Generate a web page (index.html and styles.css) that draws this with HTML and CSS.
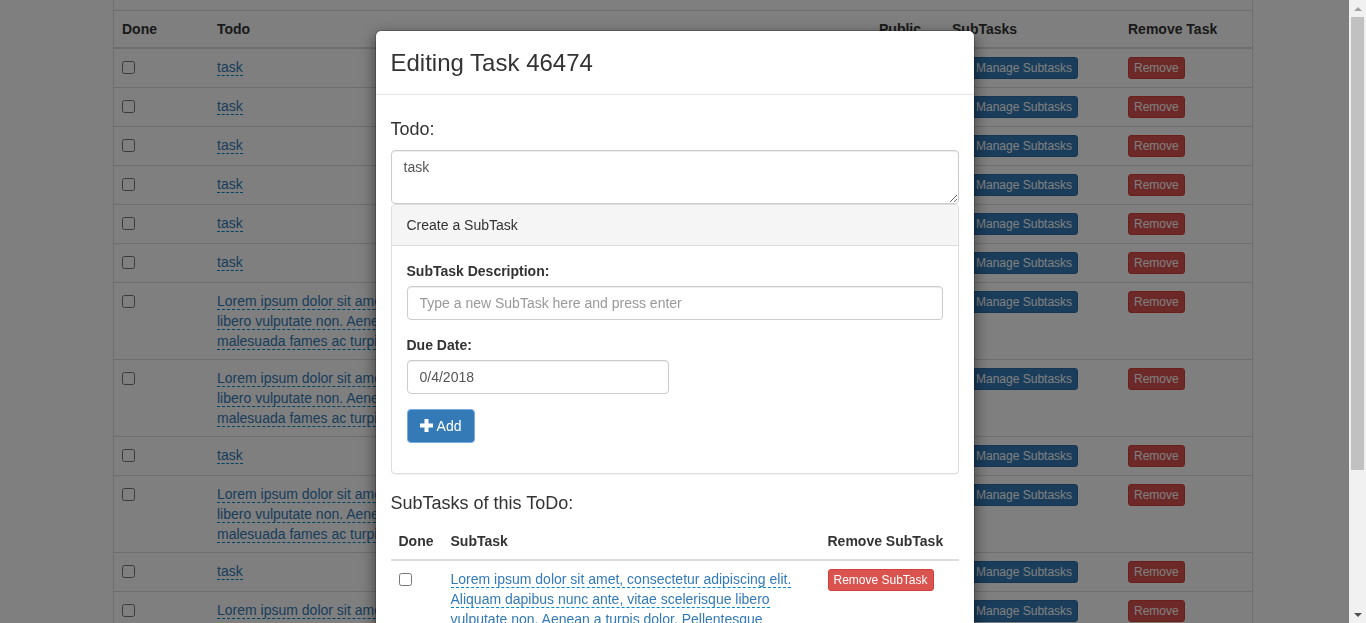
FILE: index.html
```html
<!DOCTYPE html>
<html lang="en">
<head>
<meta charset="utf-8">
<title>Editing Task 46474</title>
<link rel="stylesheet" href="styles.css">
</head>
<body class="modal-open">
  <div class="container">
    <div class="board">
      <div class="board-top"></div>
      <table class="table tasks">
        <colgroup>
          <col class="c-done"><col class="c-todo"><col class="c-public"><col class="c-sub"><col class="c-remove">
        </colgroup>
        <thead>
          <tr><th>Done</th><th>Todo</th><th>Public</th><th>SubTasks</th><th>Remove Task</th></tr>
        </thead>
        <tbody>
          <tr><td><input type="checkbox"></td><td><a class="editable">task</a></td><td></td><td><button class="btn btn-primary btn-xs manage">Manage Subtasks</button></td><td><button class="btn btn-danger btn-xs">Remove</button></td></tr>
          <tr><td><input type="checkbox"></td><td><a class="editable">task</a></td><td></td><td><button class="btn btn-primary btn-xs manage">Manage Subtasks</button></td><td><button class="btn btn-danger btn-xs">Remove</button></td></tr>
          <tr><td><input type="checkbox"></td><td><a class="editable">task</a></td><td></td><td><button class="btn btn-primary btn-xs manage">Manage Subtasks</button></td><td><button class="btn btn-danger btn-xs">Remove</button></td></tr>
          <tr><td><input type="checkbox"></td><td><a class="editable">task</a></td><td></td><td><button class="btn btn-primary btn-xs manage">Manage Subtasks</button></td><td><button class="btn btn-danger btn-xs">Remove</button></td></tr>
          <tr><td><input type="checkbox"></td><td><a class="editable">task</a></td><td></td><td><button class="btn btn-primary btn-xs manage">Manage Subtasks</button></td><td><button class="btn btn-danger btn-xs">Remove</button></td></tr>
          <tr><td><input type="checkbox"></td><td><a class="editable">task</a></td><td></td><td><button class="btn btn-primary btn-xs manage">Manage Subtasks</button></td><td><button class="btn btn-danger btn-xs">Remove</button></td></tr>
          <tr><td><input type="checkbox"></td><td><a class="editable">Lorem ipsum dolor sit amet, consectetur adipiscing elit. Aliquam dapibus nunc ante, vitae scelerisque libero vulputate non. Aenean a turpis dolor. Pellentesque habitant morbi tristique senectus et netus et malesuada fames ac turpis egestas.</a></td><td></td><td><button class="btn btn-primary btn-xs manage">Manage Subtasks</button></td><td><button class="btn btn-danger btn-xs">Remove</button></td></tr>
          <tr><td><input type="checkbox"></td><td><a class="editable">Lorem ipsum dolor sit amet, consectetur adipiscing elit. Aliquam dapibus nunc ante, vitae scelerisque libero vulputate non. Aenean a turpis dolor. Pellentesque habitant morbi tristique senectus et netus et malesuada fames ac turpis egestas.</a></td><td></td><td><button class="btn btn-primary btn-xs manage">Manage Subtasks</button></td><td><button class="btn btn-danger btn-xs">Remove</button></td></tr>
          <tr><td><input type="checkbox"></td><td><a class="editable">task</a></td><td></td><td><button class="btn btn-primary btn-xs manage">Manage Subtasks</button></td><td><button class="btn btn-danger btn-xs">Remove</button></td></tr>
          <tr><td><input type="checkbox"></td><td><a class="editable">Lorem ipsum dolor sit amet, consectetur adipiscing elit. Aliquam dapibus nunc ante, vitae scelerisque libero vulputate non. Aenean a turpis dolor. Pellentesque habitant morbi tristique senectus et netus et malesuada fames ac turpis egestas.</a></td><td></td><td><button class="btn btn-primary btn-xs manage">Manage Subtasks</button></td><td><button class="btn btn-danger btn-xs">Remove</button></td></tr>
          <tr><td><input type="checkbox"></td><td><a class="editable">task</a></td><td></td><td><button class="btn btn-primary btn-xs manage">Manage Subtasks</button></td><td><button class="btn btn-danger btn-xs">Remove</button></td></tr>
          <tr><td><input type="checkbox"></td><td><a class="editable">Lorem ipsum dolor sit amet, consectetur adipiscing elit. Aliquam dapibus nunc ante, vitae scelerisque libero vulputate non. Aenean a turpis dolor. Pellentesque habitant morbi tristique senectus et netus et malesuada fames ac turpis egestas.</a></td><td></td><td><button class="btn btn-primary btn-xs manage">Manage Subtasks</button></td><td><button class="btn btn-danger btn-xs">Remove</button></td></tr>
          <tr><td><input type="checkbox"></td><td><a class="editable">task</a></td><td></td><td><button class="btn btn-primary btn-xs manage">Manage Subtasks</button></td><td><button class="btn btn-danger btn-xs">Remove</button></td></tr>
        </tbody>
      </table>
    </div>
  </div>

  <div class="modal-backdrop"></div>

  <div class="modal">
    <div class="modal-dialog">
      <div class="modal-content">
        <div class="modal-header">
          <h4 class="modal-title">Editing Task 46474</h4>
        </div>
        <div class="modal-body">
          <h4 class="section-title">Todo:</h4>
          <textarea class="form-control todo-text" rows="2">task</textarea>
          <div class="panel">
            <div class="panel-heading">Create a SubTask</div>
            <div class="panel-body">
              <div class="form-group">
                <label class="control-label">SubTask Description:</label>
                <input class="form-control" type="text" placeholder="Type a new SubTask here and press enter">
              </div>
              <div class="form-group">
                <label class="control-label">Due Date:</label>
                <input class="form-control date-input" type="text" value="0/4/2018">
              </div>
              <div class="form-group">
                <button class="btn btn-primary btn-add"><svg class="icon-plus" width="13" height="13" viewBox="0 0 13 13" aria-hidden="true"><path d="M4.5 0h4v4.5H13v4H8.5V13h-4V8.5H0v-4h4.5z" fill="#fff"/></svg> Add</button>
              </div>
            </div>
          </div>
          <h4 class="section-title subtasks-title">SubTasks of this ToDo:</h4>
          <table class="table subtasks">
            <colgroup><col class="s-done"><col class="s-text"><col class="s-remove"></colgroup>
            <thead>
              <tr><th>Done</th><th>SubTask</th><th>Remove SubTask</th></tr>
            </thead>
            <tbody>
              <tr>
                <td><input type="checkbox"></td>
                <td><a class="editable">Lorem ipsum dolor sit amet, consectetur adipiscing elit. Aliquam dapibus nunc ante, vitae scelerisque libero vulputate non. Aenean a turpis dolor. Pellentesque habitant morbi tristique senectus et netus et malesuada fames ac turpis egestas.</a></td>
                <td><button class="btn btn-danger btn-xs">Remove SubTask</button></td>
              </tr>
            </tbody>
          </table>
        </div>
        <div class="modal-footer">
          <button class="btn btn-default">Close</button>
        </div>
      </div>
    </div>
  </div>

  <div class="scrollbar" aria-hidden="true">
    <div class="sb-btn"><span class="sb-arrow sb-up"></span></div>
    <div class="sb-track"><div class="sb-thumb"></div></div>
    <div class="sb-btn"><span class="sb-arrow sb-down"></span></div>
  </div>
</body>
</html>
```
FILE: styles.css
```css
* { box-sizing: border-box; }

html, body { height: 100%; }

body {
  margin: 0;
  font-family: "Liberation Sans", Arial, sans-serif;
  font-size: 14px;
  line-height: 1.42857143;
  color: #333;
  background: #fff;
  overflow: hidden;
}

/* ---------- background page ---------- */
.container {
  width: 1140px;
  margin: 0 auto;
}

.board {
  border-left: 1px solid #ddd;
  border-right: 1px solid #ddd;
}

.board-top {
  height: 11px;
  border-bottom: 1px solid #ddd;
}

.table {
  width: 100%;
  border-collapse: collapse;
  border-spacing: 0;
  table-layout: fixed;
}

.table th,
.table td {
  padding: 8px;
  line-height: 20px;
  vertical-align: top;
  text-align: left;
  border-top: 1px solid #ddd;
}

.table thead th {
  border-top: 0;
  border-bottom: 2px solid #ddd;
  vertical-align: bottom;
  font-weight: bold;
}

.c-done { width: 95px; }
.c-todo { width: 662px; }
.c-public { width: 73px; }
.c-sub { width: 176px; }
.c-remove { width: 132px; }

input[type="checkbox"] {
  width: 13px;
  height: 13px;
  margin: 4px 0 0;
}

a.editable {
  color: #337ab7;
  text-decoration: none;
  border-bottom: 1px dashed #0088cc;
  cursor: pointer;
}

.btn {
  display: inline-block;
  margin: 0;
  padding: 6px 12px;
  font-family: inherit;
  font-size: 14px;
  line-height: 20px;
  text-align: center;
  white-space: nowrap;
  vertical-align: middle;
  border: 1px solid transparent;
  border-radius: 4px;
  cursor: pointer;
}

.btn-xs {
  padding: 1px 5px;
  font-size: 12px;
  line-height: 18px;
  border-radius: 3px;
  vertical-align: top;
}

.btn-primary {
  color: #fff;
  background-color: #337ab7;
  border-color: #2e6da4;
}

.btn-danger {
  color: #fff;
  background-color: #d9534f;
  border-color: #d43f3a;
}

.btn-default {
  color: #333;
  background-color: #fff;
  border-color: #ccc;
}

.manage { margin-left: 18px; }

/* ---------- modal ---------- */
.modal-backdrop {
  position: fixed;
  top: 0; right: 0; bottom: 0; left: 0;
  background: #000;
  opacity: 0.5;
  z-index: 1040;
}

.modal {
  position: fixed;
  top: 0; right: 17px; bottom: 0; left: 0;
  overflow-x: hidden;
  overflow-y: auto;
  z-index: 1050;
}

.modal-dialog {
  width: 600px;
  margin: 30px auto;
}

.modal-content {
  background: #fff;
  background-clip: padding-box;
  border: 1px solid rgba(0, 0, 0, 0.2);
  border-radius: 6px;
  box-shadow: 0 5px 15px rgba(0, 0, 0, 0.5);
}

.modal-header {
  padding: 15px;
  border-bottom: 1px solid #e5e5e5;
}

.modal-title {
  margin: 0;
  font-size: 24px;
  font-weight: normal;
  line-height: 33px;
}

.modal-body {
  padding: 15px;
}

.section-title {
  margin: 10px 0;
  font-size: 18px;
  font-weight: normal;
  line-height: 1.1;
}

.subtasks-title {
  margin-bottom: 9px;
}

.form-control {
  display: block;
  width: 100%;
  height: 34px;
  padding: 6px 12px;
  font-family: inherit;
  font-size: 14px;
  line-height: 20px;
  color: #555;
  background: #fff;
  border: 1px solid #ccc;
  border-radius: 4px;
  box-shadow: inset 0 1px 1px rgba(0, 0, 0, 0.075);
}

.form-control::placeholder { color: #999; opacity: 1; }

textarea.todo-text {
  height: 54px;
  resize: vertical;
  margin: 0;
}

.date-input { width: 262px; }

.panel {
  margin-bottom: 20px;
  background: #fff;
  border: 1px solid #ddd;
  border-radius: 4px;
  box-shadow: 0 1px 1px rgba(0, 0, 0, 0.05);
}

.panel-heading {
  padding: 10px 15px;
  background: #f5f5f5;
  border-bottom: 1px solid #ddd;
  border-radius: 3px 3px 0 0;
  color: #333;
}

.panel-body {
  padding: 15px;
}

.form-group {
  margin-bottom: 15px;
}

.control-label {
  display: inline-block;
  margin-bottom: 5px;
  font-weight: bold;
}

.btn-add {
  border-color: #78abe4;
}

.icon-plus {
  display: inline-block;
  vertical-align: -1px;
  margin-right: 1px;
}

.subtasks { margin-bottom: 20px; }
.s-done { width: 52px; }
.s-remove { width: 139px; }

.modal-footer {
  padding: 15px;
  text-align: right;
  border-top: 1px solid #e5e5e5;
}

/* ---------- window scrollbar of the modal ---------- */
.scrollbar {
  position: fixed;
  top: 0;
  right: 0;
  bottom: 0;
  width: 17px;
  display: flex;
  flex-direction: column;
  background: #f1f1f1;
  z-index: 1060;
}

.sb-btn {
  height: 17px;
  flex: none;
  display: flex;
  align-items: center;
  justify-content: center;
}

.sb-arrow {
  width: 0;
  height: 0;
  border-left: 4px solid transparent;
  border-right: 4px solid transparent;
}

.sb-up { border-bottom: 4px solid #a3a3a3; }
.sb-down { border-top: 4px solid #505050; }

.sb-track {
  flex: 1;
  padding: 0 2px;
}

.sb-thumb {
  height: 453px;
  background: #c1c1c1;
}
```
